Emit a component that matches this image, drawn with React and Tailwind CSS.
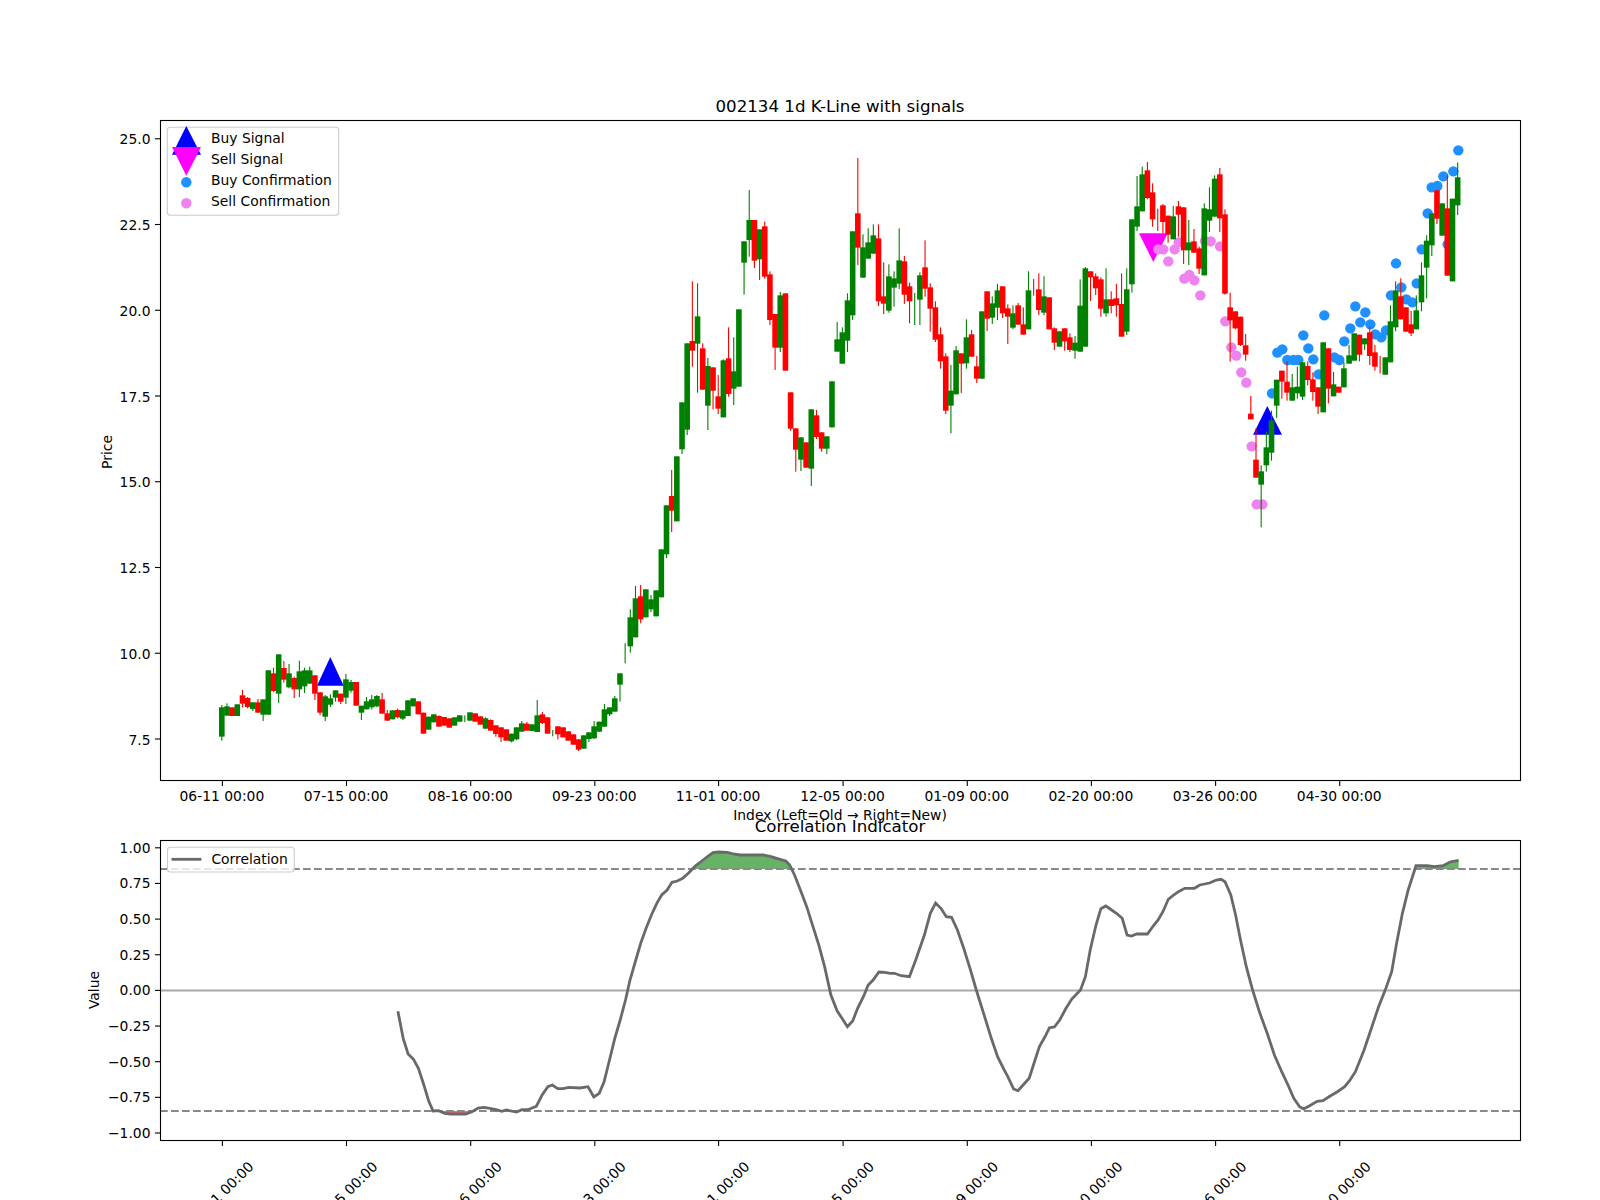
// candle data read off the chart: [colour, bodyTop, bodyBottom, wickTop, wickBottom]
// y values are in crop units (3x) with the crop's top edge given by `top`
const SEGMENTS = [
  { top: 620, bars: [
    ['g',262,350,255,362],['g',259,287,250,287],['r',262,288],['g',253,288],['r',226,251,210,262],
    ['r',234,261,231,265],['g',247,267,247,273],['r',247,278,237,278],['g',238,284,238,303],['g',151,284],
    ['r',160,213,143,217],['g',103,221,103,249],['r',144,179,123,188],['g',160,202,132,205],['r',174,208,170,234],
    ['g',154,208,122,231],['g',151,199,143,219],['g',151,191,140,191],['r',166,221,166,240],['r',217,278,217,285],
    ['g',229,290,225,303],['g',235,254,223,261],['g',211,233,211,245],['r',221,245,221,252],['g',178,233,162,252],
    ['g',186,212,180,218],['r',186,257],['g',257,278,257,300],['g',244,268,231,268],['g',238,262,225,268],
    ['g',228,259,225,262],['r',238,281,219,281],['r',280,302,270,302],['g',271,298],['r',270,292,266,295],
    ['g',271,296,271,300],['g',241,288],['g',235,259],['r',244,283],['r',278,341],
    ['g',290,329],['g',283,307],['r',288,320,286,320],['r',291,317],['r',295,323],
    ['g',292,317],['g',286,305],['g',296,296,286,306],['g',277,302],['r',280,305],
    ['r',289,314],['g',295,326,292,326],['r',300,332,298,332],['r',316,342,316,350],['r',322,352,322,366],
    ['r',328,362],['g',341,364,341,367],['g',322,358,322,360],['g',310,335,303,335],['r',311,332,306,332],
    ['g',313,333],['g',286,336,240,336],['r',283,309,276,312],['r',292,341],['g',340,340,330,349],
    ['r',319,343,319,358],['r',322,352],['r',334,362],['r',343,374],['r',358,389,358,393],
    ['g',346,386],['g',337,357,337,366],['g',319,355,303,357],['g',305,335],['g',268,320,252,320],
    ['g',262,283,262,288],['g',235,275,228,275],['g',160,194,160,245],
  ] },
  { top: 480, bars: [
    ['g',520,520,490,550],['g',412,499,388,518],['g',355,472,318,472],['r',349,418,315,430],['g',328,412],
    ['g',358,388,345,396],['g',331,409],['g',208,352],['g',76,223,76,234],
  ] },
  { top: 120, bars: [
    ['r',1128,1172,1050,1236],['g',1009,1204],['g',847,988,847,1002],['g',670,929,670,945],['r',663,692,484,740],
    ['g',589,671,490,818],['r',685,809,670,809],['g',738,857,714,930],['r',742,812,742,868],['r',829,866,765,882],
    ['g',721,892,718,892],['r',715,822,622,830],['g',754,806,652,855],['g',568,800],['g',364,428,364,524],
    ['g',300,360,210,410],['r',300,422,300,444],['g',328,418,328,480],['r',319,470,304,476],['r',463,600,454,615],
    ['r',582,683,582,750],['g',526,683,516,696],['r',520,752],['r',817,926,817,932],['r',925,989,925,1055],
    ['g',952,1019,952,1053],['r',967,1043],['g',868,1046,868,1098],['r',886,951,870,957],['r',937,986,937,995],
    ['g',949,986,949,1002],['g',784,922],['g',658,695,606,695],['g',637,731,622,731],['g',541,662,520,696],
    ['g',334,586,334,600],['r',280,383,114,435],['g',382,473,343,473],['g',367,416,325,416],['g',346,401,313,401],
    ['r',355,544,313,558],['r',529,551,427,582],['g',469,572,433,578],['g',475,503,454,560],['g',421,491,325,507],
    ['r',424,524,408,552],['r',499,544,488,610],['g',560,560,519,615],['g',466,539,457,615],['r',442,506,361,530],
    ['r',502,566,490,635],['r',562,659,544,666],['r',643,724,622,746],['r',709,872,700,882],['g',812,857,735,940],
    ['g',691,823,678,823],['r',700,731,700,819],['g',652,730,598,746],['r',643,710,630,710],['r',739,776,708,789],
    ['g',574,776],['r',514,596,514,633],['g',550,593,529,612],['g',511,563,492,600],['r',499,580,499,594],
    ['r',565,590,553,672],['g',580,623,556,627],['r',556,614,549,614],['r',613,644,562,644],['g',511,628,454,628],
    ['r',500,500,477,527],['r',508,570,460,585],['g',529,578,469,586],['r',532,628],['r',625,668,622,690],
    ['g',634,680],['r',625,664,625,692],['r',652,690,640,696],['g',668,692,648,716],['g',557,695,478,695],
    ['g',445,680,441,680],
  ] },
  { top: 120, bars: [
    ['r',454,472,454,543],['r',469,505,460,525],['r',478,566,472,590],['g',538,580,445,590],['r',538,558,514,580],
    ['r',535,556,492,590],['r',552,650,460,650],['g',508,635,445,645],['g',298,493,298,518],['g',259,320,168,333],
    ['g',163,274,140,274],['r',151,234,126,238],['r',217,298,190,320],['r',300,300,266,333],['r',256,306,252,340],
    ['r',287,344,287,368],['g',289,358,258,358],['r',259,284,243,350],['r',262,391,262,432],['g',367,391,300,435],
    ['r',364,398,327,398],['r',385,446,380,462],['g',265,466,250,466],['g',268,302,202,336],['g',176,290,166,290],
    ['r',163,295,144,336],['r',283,521,268,524],['r',562,601,518,725],['r',574,625,574,628],['r',590,675,590,678],
    ['r',676,704,642,722],['r',881,898,828,898],['r',1019,1073,925,1073],['g',1054,1094,1036,1222],['g',982,1036,934,1055],
    ['g',901,998,872,1022],['g',779,857,779,894],['r',752,785,752,836],['r',785,818,724,842],['g',802,842,762,842],
    ['g',800,820,740,836],['g',727,830,727,840],['r',738,780,724,796],['r',778,816,757,842],['r',802,860,802,882],
    ['g',667,877],['r',685,806,685,850],['g',793,829,756,829],['r',800,818],['g',745,802,726,802],
    ['g',706,731,675,731],['g',640,722],['r',644,704,644,724],['g',655,673,655,690],['r',637,708,620,735],
    ['r',697,740,675,752],['r',730,730,708,760],['g',712,764],['g',604,727,556,727],['g',511,622,484,634],
    ['r',529,598,475,598],['r',562,635],['r',613,640,573,648],['g',571,628,526,628],['g',466,547,427,574],
    ['g',362,443,346,535],['g',280,376,280,408],['r',211,296,211,312],['g',250,347],['r',265,467,166,467],
    ['g',236,484],['g',172,256,127,285],
  ] },
];

const BAR_STEP = 5.171;
const BAR_ORIGIN = 221.8;
const BODY_W = 5.6;
const WICK_W = 1.1;

const candles = SEGMENTS.flatMap((seg) =>
  seg.bars.map(([c, bt, bb, wt = bt, wb = bb]) => {
    const py = (v) => seg.top + v / 3;
    return { c, bt: py(bt), bb: py(bb), wt: py(wt), wb: py(wb) };
  })
);

const BAR_CLASS = { g: 'fill-[#008000]', r: 'fill-[#ff0000]' };

// dots in 3x crop units of the region at (1080,120)
const BUY_DOTS = [[576,820],[592,698],[607,688],[622,720],[640,720],[655,720],[670,646],[685,685],[700,718],[716,763],[733,586],[763,712],[778,720],[793,664],[811,625],[826,559],[841,607],[856,577],[871,613],[886,643],[904,652],[918,631],[933,526],[948,430],[964,502],[979,538],[997,547],[1010,490],[1025,388],[1043,280],[1055,202],[1072,198],[1090,169],[1103,373],[1120,154],[1135,91]];
const SELL_DOTS = [[235,388],[250,388],[265,424],[284,388],[296,367],[313,476],[328,465],[343,481],[361,526],[375,363],[392,364],[420,379],[436,604],[454,682],[469,707],[484,757],[499,788],[515,979],[530,1153],[547,1153]];

const dotX = (x) => 1080 + x / 3;
const dotY = (y) => 120 + y / 3;

const PRICE_TICKS = ['7.5', '10.0', '12.5', '15.0', '17.5', '20.0', '22.5', '25.0'];
const priceY = (p) => 739 - (p - 7.5) * 34.3;

const X_TICKS = [
  [222.4, '06-11 00:00'], [346.5, '07-15 00:00'], [470.7, '08-16 00:00'], [594.8, '09-23 00:00'], [718.6, '11-01 00:00'],
  [843.1, '12-05 00:00'], [967.3, '01-09 00:00'], [1091.4, '02-20 00:00'], [1215.6, '03-26 00:00'], [1339.7, '04-30 00:00'],
];

const VALUE_TICKS = [[1, '1.00'], [0.75, '0.75'], [0.5, '0.50'], [0.25, '0.25'], [0, '0.00'], [-0.25, '−0.25'], [-0.5, '−0.50'], [-0.75, '−0.75'], [-1, '−1.00']];
const valueY = (v) => 990.4 - 142.6 * v;

const CURVE_A = [[712,634],[724,715],[735,762],[747,778],[758,805],[769,850],[781,903],[791,933],[803,932],[817,940],[830,942],[844,942],[864,942],[878,935],[892,924],[905,922],[918,925],[932,929],[945,934],[955,930],[978,936],[990,929],[1003,929],[1022,919],[1035,885],[1048,860],[1058,855],[1070,866],[1082,866],[1095,862],[1120,864],[1138,860],[1151,891],[1163,880],[1174,845],[1186,780],[1198,715],[1210,660],[1222,600],[1232,540],[1245,480],[1256,430],[1268,385],[1280,345],[1292,310],[1303,285],[1315,270],[1326,247],[1338,243],[1350,235],[1364,218],[1378,198],[1390,186],[1404,171],[1418,158],[1430,156],[1450,157],[1464,162],[1478,165],[1500,165],[1530,165],[1548,170]];
const CURVE_B = [[0,178],[12,183],[20,195],[30,225],[42,270],[55,320],[68,380],[80,435],[92,500],[105,585],[118,633],[128,655],[139,680],[150,663],[160,625],[172,590],[182,555],[192,540],[204,516],[216,517],[228,520],[236,520],[250,527],[267,530],[280,480],[298,405],[310,340],[321,309],[332,325],[343,350],[354,352],[366,390],[378,440],[392,505],[405,570],[420,640],[436,715],[449,770],[462,808],[470,830],[482,867],[491,872],[503,853],[514,835],[525,785],[535,740],[546,712],[556,683],[566,681],[577,660],[590,625],[602,597],[620,570],[630,530],[640,450],[652,375],[662,326],[672,318],[684,330],[694,340],[706,355],[716,405],[725,408],[736,402],[758,402],[770,378],[780,360],[790,335],[801,298],[812,285],[822,275],[835,265],[855,265],[866,255],[886,249],[900,240],[910,238],[918,245],[930,285],[940,345],[950,420],[962,500],[975,570],[990,640],[1005,700],[1020,765],[1035,815],[1048,855],[1060,895],[1072,920],[1080,927],[1092,918],[1108,904],[1120,902],[1135,888],[1150,875],[1165,860],[1175,842],[1187,815],[1205,750],[1220,685],[1235,620],[1250,565],[1262,515],[1272,430],[1284,340],[1296,270],[1312,197],[1335,197],[1350,200],[1368,197],[1382,186],[1400,181]];

const curve = [
  ...CURVE_A.map(([x, y]) => [80 + x / 2.24, 800 + y / 3]),
  ...CURVE_B.map(([x, y]) => [780 + x / 2.063, 800 + y / 3]),
];
const curvePath = curve.map(([x, y]) => `${x.toFixed(1)},${y.toFixed(1)}`).join(' ');
const firstX = curve[0][0].toFixed(1);
const lastX = curve[curve.length - 1][0].toFixed(1);

function Legend({ x, y, w, h }) {
  return <rect x={x} y={y} width={w} height={h} rx="3" className="fill-white/80 stroke-[#cccccc] stroke-[1.1px]" />;
}

function PricePanel() {
  return (
    <svg viewBox="0 0 1600 820" className="block w-[1600px] h-[820px] overflow-visible">
      <text x="840" y="111.5" textAnchor="middle" className="text-[16.67px] fill-black">002134 1d K-Line with signals</text>

      {/* signals go under the dots, dots under the candles */}
      <polygon points="330.3,657 317,685.7 343.7,685.7" className="fill-[#0000ff]" />
      <polygon points="1267.3,406 1253,434.7 1282,434.7" className="fill-[#0000ff]" />
      <polygon points="1139,233.3 1167.7,233.3 1153.3,262" className="fill-[#ff00ff]" />

      {SELL_DOTS.map(([x, y], i) => <circle key={i} cx={dotX(x)} cy={dotY(y)} r="5.2" className="fill-[#ee82ee]" />)}
      {BUY_DOTS.map(([x, y], i) => <circle key={i} cx={dotX(x)} cy={dotY(y)} r="5.2" className="fill-[#1e90ff]" />)}

      {candles.map((b, i) => {
        const cx = BAR_ORIGIN + i * BAR_STEP;
        return (
          <g key={i} className={BAR_CLASS[b.c]}>
            <rect x={cx - WICK_W / 2} y={b.wt} width={WICK_W} height={b.wb - b.wt} />
            {b.bb > b.bt && <rect x={cx - BODY_W / 2} y={b.bt} width={BODY_W} height={b.bb - b.bt} />}
          </g>
        );
      })}

      <rect x="160.5" y="120.5" width="1360" height="660" className="fill-none stroke-black stroke-[1.1px]" />

      {PRICE_TICKS.map((t) => (
        <g key={t}>
          <line x1="155" x2="160" y1={priceY(+t)} y2={priceY(+t)} className="stroke-black stroke-[1.1px]" />
          <text x="150.5" y={priceY(+t) + 5.5} textAnchor="end" className="text-[13.89px] fill-black">{t}</text>
        </g>
      ))}
      {X_TICKS.map(([x, label]) => (
        <g key={label}>
          <line x1={x} x2={x} y1="781" y2="786" className="stroke-black stroke-[1.1px]" />
          <text x={x - 0.5} y="801" textAnchor="middle" className="text-[13.89px] fill-black">{label}</text>
        </g>
      ))}

      <text x="840" y="820" textAnchor="middle" className="text-[13.89px] fill-black">Index (Left=Old → Right=New)</text>
      <text transform="translate(112 452) rotate(-90)" textAnchor="middle" className="text-[13.89px] fill-black">Price</text>

      <Legend x="167.3" y="127.3" w="171.4" h="88" />
      <polygon points="186.3,126 172,154.7 201,154.7" className="fill-[#0000ff]" />
      <polygon points="172,147 201,147 186.3,175.7" className="fill-[#ff00ff]" />
      <circle cx="186.3" cy="182.3" r="5.2" className="fill-[#1e90ff]" />
      <circle cx="186.3" cy="203.3" r="5.2" className="fill-[#ee82ee]" />
      <text x="211" y="143.3" className="text-[13.89px] fill-black">Buy Signal</text>
      <text x="211" y="164.3" className="text-[13.89px] fill-black">Sell Signal</text>
      <text x="211" y="185.3" className="text-[13.89px] fill-black">Buy Confirmation</text>
      <text x="211" y="206.3" className="text-[13.89px] fill-black">Sell Confirmation</text>
    </svg>
  );
}

function CorrelationPanel() {
  return (
    <svg viewBox="0 820 1600 380" className="block w-[1600px] h-[380px] overflow-visible">
      <defs>
        <clipPath id="above-band"><rect x="160" y="840" width="1360" height="29" /></clipPath>
        <clipPath id="below-band"><rect x="160" y="1111" width="1360" height="28" /></clipPath>
      </defs>

      <text x="840" y="831.5" textAnchor="middle" className="text-[16.67px] fill-black">Correlation Indicator</text>

      <polygon points={`${curvePath} ${lastX},1140 ${firstX},1140`} clipPath="url(#above-band)" className="fill-[#008000]/60" />
      <polygon points={`${curvePath} ${lastX},840 ${firstX},840`} clipPath="url(#below-band)" className="fill-[#ff0000]/60" />

      <line x1="160" x2="1520" y1={valueY(0)} y2={valueY(0)} className="stroke-[#a9a9a9] stroke-[2px]" />
      <line x1="160" x2="1520" y1="869" y2="869" strokeDasharray="7.7 3.3" className="stroke-[#888888] stroke-[2px]" />
      <line x1="160" x2="1520" y1="1111" y2="1111" strokeDasharray="7.7 3.3" className="stroke-[#888888] stroke-[2px]" />

      <polyline points={curvePath} className="fill-none stroke-[#696969] stroke-[2.8px]" />

      <rect x="160.5" y="840.5" width="1360" height="300" className="fill-none stroke-black stroke-[1.1px]" />

      {VALUE_TICKS.map(([v, label]) => (
        <g key={label}>
          <line x1="155" x2="160" y1={valueY(v)} y2={valueY(v)} className="stroke-black stroke-[1.1px]" />
          <text x="150.5" y={valueY(v) + 5} textAnchor="end" className="text-[13.89px] fill-black">{label}</text>
        </g>
      ))}
      {X_TICKS.map(([x, label]) => (
        <g key={label}>
          <line x1={x} x2={x} y1="1141" y2="1146" className="stroke-black stroke-[1.1px]" />
          <text transform={`translate(${x - 1.5} 1194) rotate(-45)`} y="5" textAnchor="middle" className="text-[13.89px] fill-black">{label}</text>
        </g>
      ))}

      <text transform="translate(99 990) rotate(-90)" textAnchor="middle" className="text-[13.89px] fill-black">Value</text>

      <Legend x="167.5" y="847.3" w="126.8" h="24.7" />
      <line x1="171.5" x2="201.4" y1="859.3" y2="859.3" className="stroke-[#696969] stroke-[2.8px]" />
      <text x="211.4" y="864.3" className="text-[13.89px] fill-black">Correlation</text>
    </svg>
  );
}

export default function App() {
  return (
    <div className="w-[1600px] h-[1200px] overflow-hidden bg-white font-['DejaVu_Sans',sans-serif]">
      <PricePanel />
      <CorrelationPanel />
    </div>
  );
}
